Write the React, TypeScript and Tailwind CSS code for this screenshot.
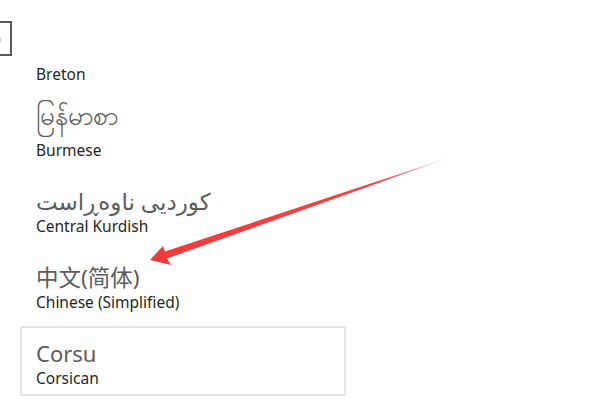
import type { ReactNode } from "react";

type Lang = { native: string; name: string; selected?: boolean; nativeClass?: string };

// Breton's native name is scrolled out of view in the list
const LANGS: Lang[] = [
  { native: "", name: "Breton" },
  { native: "မြန်မာစာ", name: "Burmese", nativeClass: "text-[26px] inline-block -translate-y-[10px]" },
  { native: "کوردیی ناوەڕاست", name: "Central Kurdish", nativeClass: "text-[23px]" },
  { native: "中文(简体)", name: "Chinese (Simplified)", nativeClass: "text-[22.5px]" },
  { native: "Corsu", name: "Corsican", selected: true },
];

function LangItem({ lang }: { lang: Lang }) {
  return (
    <div
      className={`mb-[6px] h-[70px] w-[326px] pl-[14px] pt-[10px] ${
        lang.selected ? "border-2 border-[#e4e4e4]" : "border-2 border-transparent"
      }`}
    >
      <div className="h-[30px] text-[22px] leading-[30px] text-[#5c5c5c]">
        <span dir="auto" className={lang.nativeClass}>
          {lang.native}
        </span>
      </div>
      <div className="text-[15.5px] leading-[20px] text-[#262626]">{lang.name}</div>
    </div>
  );
}

function Arrow(): ReactNode {
  return (
    <svg className="pointer-events-none absolute left-0 top-0" width="600" height="400" viewBox="0 0 600 400">
      <defs>
        <linearGradient id="tail" x1="150" y1="260" x2="455" y2="156" gradientUnits="userSpaceOnUse">
          <stop offset="0" stopColor="#f03a3a" />
          <stop offset="0.75" stopColor="#f24545" />
          <stop offset="1" stopColor="#f24545" stopOpacity="0.1" />
        </linearGradient>
      </defs>
      <polygon
        points="150,260 163,246 165,251.5 454,156 167,258.5 171,265"
        fill="url(#tail)"
      />
    </svg>
  );
}

export default function App() {
  return (
    <div
      className="relative h-[400px] w-[600px] overflow-hidden bg-white"
      style={{ fontFamily: '"Noto Sans", "Noto Sans CJK SC", "DejaVu Sans", sans-serif' }}
    >
      {/* top bar, mostly scrolled off */}
      <div className="h-[68px] pt-[21px]">
        <div className="-ml-[28px] flex h-[35px] w-[40px] items-center justify-end border-2 border-[#5a5a5a] pr-[8px]">
          <span className="text-[11px] leading-none text-[#c8c8c8]">o</span>
        </div>
      </div>

      {/* language list, scrolled so Breton is half hidden */}
      <div className="h-[332px] overflow-hidden pl-[20px]">
        <div className="-mt-[46px]">
          {LANGS.map((l) => (
            <LangItem key={l.name} lang={l} />
          ))}
        </div>
      </div>

      <Arrow />
    </div>
  );
}
